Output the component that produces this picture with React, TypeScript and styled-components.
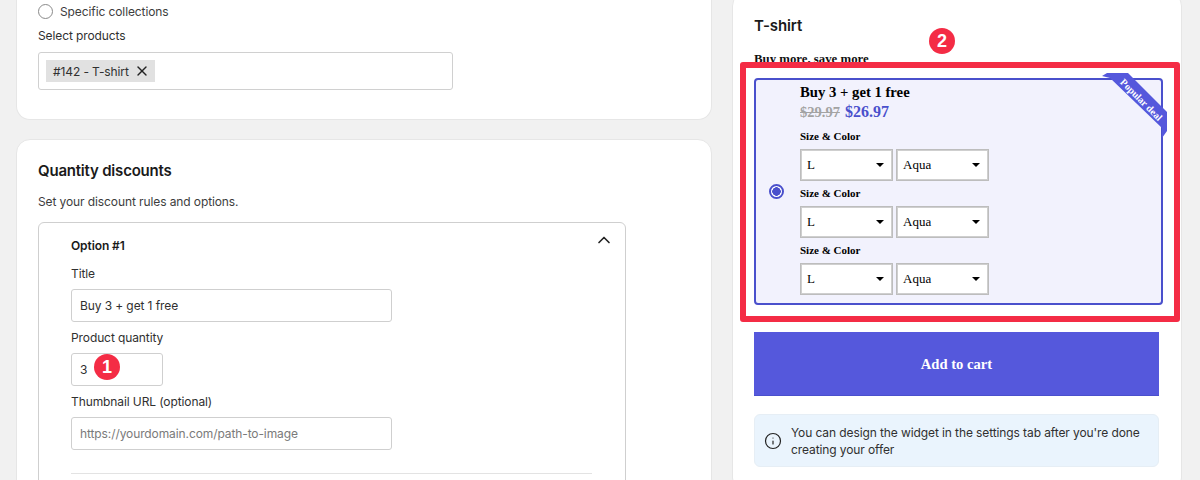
import React from "react";
import styled, { createGlobalStyle } from "styled-components";
import { ChevronUp, Info, X } from "lucide-react";

const GlobalStyle = createGlobalStyle`
  html, body {
    margin: 0;
    padding: 0;
    height: 480px;
    overflow: hidden;
    background: #f1f1f1;
  }
  * {
    box-sizing: border-box;
  }
`;

const Page = styled.div`
  position: relative;
  width: 1200px;
  height: 480px;
  overflow: hidden;
  display: grid;
  grid-template-columns: 696px 450px;
  column-gap: 20px;
  padding-left: 16px;
  align-items: start;
  font-family: Inter, "Liberation Sans", sans-serif;
  font-size: 12px;
  letter-spacing: -0.1px;
  color: #303030;
`;

const Column = styled.div`
  display: flex;
  flex-direction: column;
  gap: 19px;
`;

const Card = styled.section`
  background: #fff;
  border: 1px solid #e6e6e6;
  border-radius: 14px;
  padding: 0 21px;
`;

const ProductsCard = styled(Card)`
  height: 121px;
  margin-top: -1px;
  border-top: none;
  border-radius: 0 0 14px 14px;
  padding-top: 5px;
`;

const RadioRow = styled.div`
  display: flex;
  align-items: center;
  gap: 7px;
  height: 15px;
  color: #3d3d3d;
`;

const RadioCircle = styled.span`
  width: 15px;
  height: 15px;
  border: 1px solid #8a8a8a;
  border-radius: 50%;
  background: #fff;
`;

const FieldLabel = styled.label`
  display: block;
  padding-top: 1px;
  line-height: 16px;
  color: #303030;
`;

const ProductsLabel = styled(FieldLabel)`
  margin-top: 8px;
`;

const TagInput = styled.div`
  width: 415px;
  height: 38px;
  margin-top: 8px;
  padding: 7px;
  border: 1px solid #d0d0d0;
  border-radius: 3px;
  background: #fff;
`;

const Tag = styled.span`
  display: inline-flex;
  align-items: center;
  gap: 5px;
  height: 22px;
  padding: 0 5px 0 7px;
  background: #e1e1e1;
  color: #303030;
`;

const DiscountCard = styled(Card)`
  height: 420px;
  padding-top: 21px;
`;

const CardTitle = styled.h2`
  margin: 0;
  font-size: 15px;
  line-height: 20px;
  font-weight: 600;
  letter-spacing: -0.2px;
  color: #1a1a1a;
`;

const Subtitle = styled.p`
  margin: 13px 0 0;
  line-height: 16px;
  color: #3d3d3d;
`;

const OptionBox = styled.div`
  position: relative;
  width: 588px;
  height: 300px;
  margin-top: 12px;
  padding: 14px 32px;
  border: 1px solid #cfcfcf;
  border-radius: 6px;
`;

const OptionHead = styled.div`
  display: flex;
  align-items: center;
  justify-content: space-between;
  height: 16px;
  margin: 0 -21px 12px 0;
  font-weight: 600;
  color: #1a1a1a;
  svg {
    margin-top: -10px;
  }
`;

const TextField = styled.div<{ $width: number; $muted?: boolean }>`
  display: flex;
  align-items: center;
  width: ${(p) => p.$width}px;
  height: 33px;
  margin: 7px 0 7px;
  padding: 0 8px;
  border: 1px solid #cfcfcf;
  border-radius: 3px;
  background: #fff;
  color: ${(p) => (p.$muted ? "#7a7a7a" : "#303030")};
`;

const Divider = styled.hr`
  width: 521px;
  margin: 23px 0 0;
  border: none;
  border-top: 1px solid #e3e3e3;
`;

const PreviewCard = styled(Card)`
  height: 500px;
  margin-top: -8px;
  padding: 23px 21px 0;
`;

const ProductName = styled.h2`
  margin: 0;
  font-size: 15px;
  line-height: 20px;
  font-weight: 600;
  color: #1a1a1a;
`;

const WidgetHeading = styled.div`
  margin-top: 16px;
  font-family: "Liberation Serif", serif;
  font-size: 12.8px;
  line-height: 14px;
  letter-spacing: 0;
  font-weight: 700;
  color: #111;
`;

const OptionCard = styled.div`
  position: relative;
  display: flex;
  align-items: center;
  width: 409px;
  height: 227px;
  margin-top: 12px;
  padding-left: 13px;
  border: 2px solid #4a50cc;
  border-radius: 4px;
  background: #f2f2fd;
  font-family: "Liberation Serif", serif;
  letter-spacing: 0;
  color: #000;
`;

const OptionRadio = styled.span`
  flex: none;
  width: 15px;
  height: 15px;
  margin-right: 16px;
  border: 2px solid #4a50cc;
  border-radius: 50%;
  background: radial-gradient(circle, #4a50cc 0 4px, #fff 4.5px);
`;

const OptionBody = styled.div`
  display: flex;
  flex-direction: column;
  height: 100%;
  padding-top: 4px;
`;

const OptionTitle = styled.div`
  font-size: 14.7px;
  line-height: 17px;
  font-weight: 700;
`;

const PriceRow = styled.div`
  display: flex;
  align-items: baseline;
  gap: 5px;
  margin-top: 1px;
  line-height: 19px;
  font-weight: 700;
`;

const OldPrice = styled.s`
  font-size: 14.5px;
  color: #a3a3a3;
`;

const NewPrice = styled.span`
  font-size: 16px;
  color: #4a50cc;
`;

const VariantBlock = styled.div`
  margin-top: 8px;
  & + & {
    margin-top: 6px;
  }
`;

const VariantLabel = styled.div`
  font-size: 11px;
  line-height: 13px;
  font-weight: 700;
  margin-bottom: 6px;
`;

const SelectRow = styled.div`
  display: flex;
  gap: 3px;
`;

const FakeSelect = styled.div`
  position: relative;
  display: flex;
  align-items: center;
  width: 93px;
  height: 32px;
  padding-left: 6px;
  border: 1px solid #bdbdbd;
  outline: 1px solid #cfcfcf;
  outline-offset: -2px;
  background: #fff;
  font-size: 13px;
  &::after {
    content: "";
    position: absolute;
    right: 8px;
    top: 13px;
    border-left: 4px solid transparent;
    border-right: 4px solid transparent;
    border-top: 4px solid #000;
  }
`;

const Ribbon = styled.svg`
  position: absolute;
  top: -10px;
  right: -6px;
`;

const RibbonText = styled.text`
  font-family: "Liberation Serif", serif;
  font-size: 10px;
  font-weight: 700;
  fill: #fff;
`;

const CartButton = styled.button`
  display: block;
  width: 405px;
  height: 64px;
  margin-top: 27px;
  padding-top: 2px;
  border: none;
  border-bottom: 1px solid #4a50cc;
  background: #5558dc;
  color: #fff;
  font-family: "Liberation Serif", serif;
  font-size: 14.6px;
  font-weight: 700;
`;

const Notice = styled.div`
  display: flex;
  align-items: center;
  gap: 9px;
  width: 405px;
  height: 53px;
  margin-top: 18px;
  padding: 0 9px;
  border: 1px solid #e6eef5;
  border-radius: 6px;
  background: #eaf4fd;
  color: #303030;
  line-height: 17px;
  svg {
    flex: none;
  }
`;

const Highlight = styled.div`
  position: absolute;
  left: 740px;
  top: 62px;
  width: 440px;
  height: 260px;
  border: 6px solid #f42c45;
  border-radius: 3px;
  pointer-events: none;
`;

const StepBadge = styled.span<{ $left: number; $top: number }>`
  position: absolute;
  left: ${(p) => p.$left}px;
  top: ${(p) => p.$top}px;
  display: flex;
  align-items: center;
  justify-content: center;
  width: 26px;
  height: 26px;
  border-radius: 50%;
  background: #f42c45;
  color: #fff;
  font-family: "Liberation Sans", sans-serif;
  font-size: 18px;
  font-weight: 700;
  letter-spacing: 0;
`;

const variants = [0, 1, 2];

export default function App() {
  return (
    <Page>
      <GlobalStyle />
      <Column>
        <ProductsCard>
          <RadioRow>
            <RadioCircle />
            Specific collections
          </RadioRow>
          <ProductsLabel>Select products</ProductsLabel>
          <TagInput>
            <Tag>
              #142 - T-shirt
              <X size={16} strokeWidth={2} color="#222" />
            </Tag>
          </TagInput>
        </ProductsCard>
        <DiscountCard>
          <CardTitle>Quantity discounts</CardTitle>
          <Subtitle>Set your discount rules and options.</Subtitle>
          <OptionBox>
            <OptionHead>
              Option #1
              <ChevronUp size={20} strokeWidth={2} color="#222" />
            </OptionHead>
            <FieldLabel>Title</FieldLabel>
            <TextField $width={321}>Buy 3 + get 1 free</TextField>
            <FieldLabel>Product quantity</FieldLabel>
            <TextField $width={92}>3</TextField>
            <FieldLabel>Thumbnail URL (optional)</FieldLabel>
            <TextField $width={321} $muted>
              https://yourdomain.com/path-to-image
            </TextField>
            <Divider />
          </OptionBox>
        </DiscountCard>
      </Column>
      <PreviewCard>
        <ProductName>T-shirt</ProductName>
        <WidgetHeading>Buy more, save more</WidgetHeading>
        <OptionCard>
          <OptionRadio />
          <OptionBody>
            <OptionTitle>Buy 3 + get 1 free</OptionTitle>
            <PriceRow>
              <OldPrice>$29.97</OldPrice>
              <NewPrice>$26.97</NewPrice>
            </PriceRow>
            {variants.map((v) => (
              <VariantBlock key={v}>
                <VariantLabel>Size &amp; Color</VariantLabel>
                <SelectRow>
                  <FakeSelect>L</FakeSelect>
                  <FakeSelect>Aqua</FakeSelect>
                </SelectRow>
              </VariantBlock>
            ))}
          </OptionBody>
          <Ribbon width="68" height="68" viewBox="0 0 68 68">
            <path d="M3 6 L8 3 L29 3 L68 42 L68 61 L63 68 L63 58 L11 8 Z" fill="#5558dc" />
            <RibbonText x="0" y="3" textAnchor="middle" transform="translate(42 30) rotate(45)">
              Popular deal
            </RibbonText>
          </Ribbon>
        </OptionCard>
        <CartButton>Add to cart</CartButton>
        <Notice>
          <Info size={18} strokeWidth={1.6} color="#222" />
          <span>You can design the widget in the settings tab after you're done creating your offer</span>
        </Notice>
      </PreviewCard>
      <Highlight />
      <StepBadge $left={94} $top={354}>1</StepBadge>
      <StepBadge $left={929} $top={28}>2</StepBadge>
    </Page>
  );
}
